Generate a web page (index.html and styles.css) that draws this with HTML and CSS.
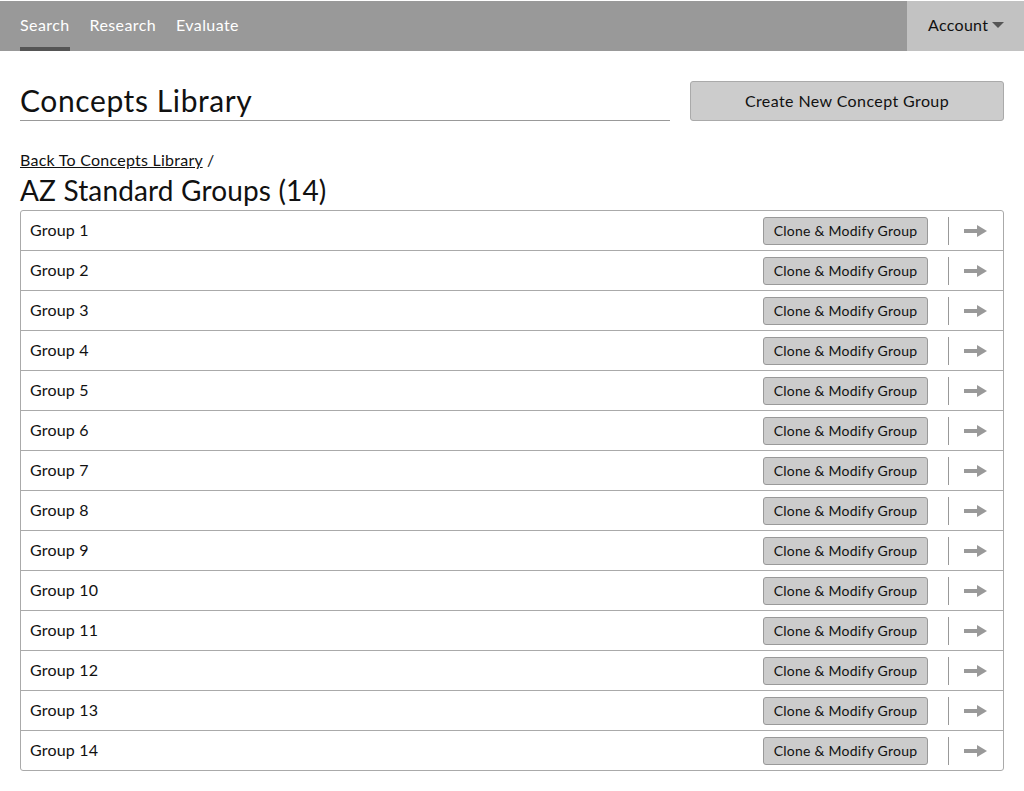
FILE: index.html
```html
<!DOCTYPE html>
<html>
<head>
<meta charset="utf-8">
<link rel="stylesheet" href="styles.css">
</head>
<body>
<header class="topbar">
  <nav class="tabs">
    <a class="tab active">Search</a>
    <a class="tab">Research</a>
    <a class="tab">Evaluate</a>
  </nav>
  <div class="account">Account <span class="caret"></span></div>
</header>
<main class="page">
  <div class="head-row">
    <h1 class="title">Concepts Library</h1>
    <button class="btn-create">Create New Concept Group</button>
  </div>
  <div class="crumb"><a class="crumb-link">Back To Concepts Library</a> /</div>
  <h2 class="subtitle">AZ Standard Groups (14)</h2>
  <ul class="list">
    <li class="row"><span class="name">Group 1</span><button class="btn-clone">Clone &amp; Modify Group</button><span class="sep"></span><svg class="arrow" width="23" height="14" viewBox="0 0 23 14"><rect x="0" y="5" width="14" height="4" fill="#999"/><polygon points="13,1 23,7 13,13" fill="#999"/></svg></li>
    <li class="row"><span class="name">Group 2</span><button class="btn-clone">Clone &amp; Modify Group</button><span class="sep"></span><svg class="arrow" width="23" height="14" viewBox="0 0 23 14"><rect x="0" y="5" width="14" height="4" fill="#999"/><polygon points="13,1 23,7 13,13" fill="#999"/></svg></li>
    <li class="row"><span class="name">Group 3</span><button class="btn-clone">Clone &amp; Modify Group</button><span class="sep"></span><svg class="arrow" width="23" height="14" viewBox="0 0 23 14"><rect x="0" y="5" width="14" height="4" fill="#999"/><polygon points="13,1 23,7 13,13" fill="#999"/></svg></li>
    <li class="row"><span class="name">Group 4</span><button class="btn-clone">Clone &amp; Modify Group</button><span class="sep"></span><svg class="arrow" width="23" height="14" viewBox="0 0 23 14"><rect x="0" y="5" width="14" height="4" fill="#999"/><polygon points="13,1 23,7 13,13" fill="#999"/></svg></li>
    <li class="row"><span class="name">Group 5</span><button class="btn-clone">Clone &amp; Modify Group</button><span class="sep"></span><svg class="arrow" width="23" height="14" viewBox="0 0 23 14"><rect x="0" y="5" width="14" height="4" fill="#999"/><polygon points="13,1 23,7 13,13" fill="#999"/></svg></li>
    <li class="row"><span class="name">Group 6</span><button class="btn-clone">Clone &amp; Modify Group</button><span class="sep"></span><svg class="arrow" width="23" height="14" viewBox="0 0 23 14"><rect x="0" y="5" width="14" height="4" fill="#999"/><polygon points="13,1 23,7 13,13" fill="#999"/></svg></li>
    <li class="row"><span class="name">Group 7</span><button class="btn-clone">Clone &amp; Modify Group</button><span class="sep"></span><svg class="arrow" width="23" height="14" viewBox="0 0 23 14"><rect x="0" y="5" width="14" height="4" fill="#999"/><polygon points="13,1 23,7 13,13" fill="#999"/></svg></li>
    <li class="row"><span class="name">Group 8</span><button class="btn-clone">Clone &amp; Modify Group</button><span class="sep"></span><svg class="arrow" width="23" height="14" viewBox="0 0 23 14"><rect x="0" y="5" width="14" height="4" fill="#999"/><polygon points="13,1 23,7 13,13" fill="#999"/></svg></li>
    <li class="row"><span class="name">Group 9</span><button class="btn-clone">Clone &amp; Modify Group</button><span class="sep"></span><svg class="arrow" width="23" height="14" viewBox="0 0 23 14"><rect x="0" y="5" width="14" height="4" fill="#999"/><polygon points="13,1 23,7 13,13" fill="#999"/></svg></li>
    <li class="row"><span class="name">Group 10</span><button class="btn-clone">Clone &amp; Modify Group</button><span class="sep"></span><svg class="arrow" width="23" height="14" viewBox="0 0 23 14"><rect x="0" y="5" width="14" height="4" fill="#999"/><polygon points="13,1 23,7 13,13" fill="#999"/></svg></li>
    <li class="row"><span class="name">Group 11</span><button class="btn-clone">Clone &amp; Modify Group</button><span class="sep"></span><svg class="arrow" width="23" height="14" viewBox="0 0 23 14"><rect x="0" y="5" width="14" height="4" fill="#999"/><polygon points="13,1 23,7 13,13" fill="#999"/></svg></li>
    <li class="row"><span class="name">Group 12</span><button class="btn-clone">Clone &amp; Modify Group</button><span class="sep"></span><svg class="arrow" width="23" height="14" viewBox="0 0 23 14"><rect x="0" y="5" width="14" height="4" fill="#999"/><polygon points="13,1 23,7 13,13" fill="#999"/></svg></li>
    <li class="row"><span class="name">Group 13</span><button class="btn-clone">Clone &amp; Modify Group</button><span class="sep"></span><svg class="arrow" width="23" height="14" viewBox="0 0 23 14"><rect x="0" y="5" width="14" height="4" fill="#999"/><polygon points="13,1 23,7 13,13" fill="#999"/></svg></li>
    <li class="row"><span class="name">Group 14</span><button class="btn-clone">Clone &amp; Modify Group</button><span class="sep"></span><svg class="arrow" width="23" height="14" viewBox="0 0 23 14"><rect x="0" y="5" width="14" height="4" fill="#999"/><polygon points="13,1 23,7 13,13" fill="#999"/></svg></li>
  </ul>
</main>
</body>
</html>
```
FILE: styles.css
```css
* { box-sizing: border-box; }
body {
  margin: 0;
  padding-top: 1px;
  font-family: Lato, "Noto Sans", sans-serif;
  color: #111;
  background: #fff;
}
.topbar {
  display: flex;
  justify-content: space-between;
  height: 50px;
  background: #999;
}
.tabs {
  display: flex;
  gap: 20px;
  padding-left: 20px;
}
.tab {
  display: flex;
  align-items: center;
  color: #fff;
  font-size: 16px;
  letter-spacing: 0.4px;
  border-bottom: 4px solid transparent;
  padding-top: 1px;
}
.tab.active { border-bottom-color: #555; }
.account {
  display: flex;
  align-items: center;
  gap: 4px;
  width: 117px;
  padding-left: 21px;
  padding-bottom: 4px;
  background: #c2c2c2;
  font-size: 16px;
  letter-spacing: 0.3px;
  color: #111;
}
.caret {
  width: 0; height: 0;
  margin-top: 2px;
  border-left: 6px solid transparent;
  border-right: 6px solid transparent;
  border-top: 6px solid #555;
}
.page { padding: 30px 20px 0 20px; }
.head-row {
  display: flex;
  justify-content: space-between;
  align-items: flex-start;
}
.title {
  margin: 0;
  width: 650px;
  font-size: 30px;
  font-weight: 400;
  letter-spacing: 0.6px;
  line-height: 38px;
  height: 40px;
  border-bottom: 1px solid #999;
}
.btn-create {
  width: 314px;
  height: 40px;
  padding-bottom: 3px;
  background: #ccc;
  border: 1px solid #aaa;
  border-radius: 3px;
  font-family: inherit;
  font-size: 16px;
  letter-spacing: 0.4px;
  color: #111;
}
.crumb {
  margin-top: 29px;
  font-size: 16px;
  letter-spacing: 0.25px;
  line-height: 20px;
}
.crumb-link { text-decoration: underline; }
.subtitle {
  margin: 0 0 2px 0;
  padding-top: 2px;
  font-size: 28px;
  font-weight: 400;
  letter-spacing: 0.15px;
  line-height: 36px;
}
.list {
  list-style: none;
  margin: 0;
  padding: 0;
  border: 1px solid #aaa;
  border-radius: 3px;
}
.row {
  display: flex;
  align-items: center;
  height: 40px;
  padding: 0 16px 0 9px;
  border-top: 1px solid #aaa;
  font-size: 16px;
  letter-spacing: 0.2px;
}
.row:first-child { border-top: 0; height: 39px; }
.name { flex: 1; margin-top: -2px; }
.btn-clone {
  height: 28px;
  width: 165px;
  padding-bottom: 2px;
  background: #ccc;
  border: 1px solid #999;
  border-radius: 3px;
  font-family: inherit;
  font-size: 14px;
  letter-spacing: 0.25px;
  color: #111;
}
.sep {
  width: 1px;
  height: 28px;
  background: #999;
  margin: 0 15px 0 20px;
}
.arrow { display: block; }
```
